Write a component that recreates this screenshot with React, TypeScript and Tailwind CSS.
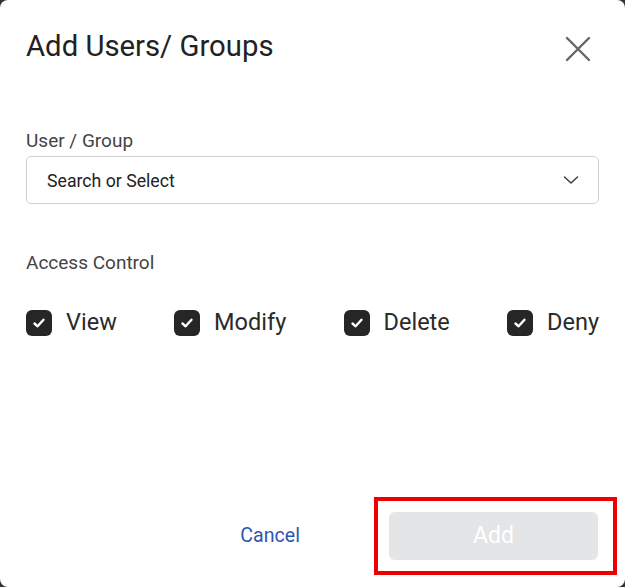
import React from "react";

function Check({ label }: { label: string }) {
  return (
    <label className="flex items-center gap-[14px]">
      <span className="flex h-[26px] w-[26px] items-center justify-center rounded-[6px] bg-[#262626]">
        <svg width="14" height="14" viewBox="0 0 14 14" fill="none">
          <path d="M2.5 7.5 L5.6 10.3 L11.5 3.8" stroke="#fff" strokeWidth="2.4" strokeLinecap="round" strokeLinejoin="round" />
        </svg>
      </span>
      <span className="text-[23.5px] text-[#2a2a2a]">{label}</span>
    </label>
  );
}

export default function App() {
  return (
    <div className="h-[587px] w-[625px] bg-[#333]" style={{ fontFamily: "Roboto, 'Liberation Sans', sans-serif" }}>
      <div className="flex h-full w-full flex-col rounded-[8px] bg-white px-[26px]">
        <div className="flex items-center justify-between pt-[28px]">
          <h1 className="text-[29.3px] leading-[36px] text-[#222]">Add Users/ Groups</h1>
          <svg width="26" height="26" viewBox="0 0 26 26" className="mr-[8px] mt-[6px]">
            <path d="M2 2 L24 24 M24 2 L2 24" stroke="#666" strokeWidth="2.4" strokeLinecap="round" />
          </svg>
        </div>
        <div className="mt-[65px] text-[19px] leading-[24px] text-[#444]">User / Group</div>
        <div className="mt-[3px] flex h-[48px] items-center justify-between rounded-[5px] border border-[#d0d0d0] pl-[20px] pr-[18px]">
          <span className="mt-[3px] text-[17.7px] text-[#222]">Search or Select</span>
          <svg width="18" height="18" viewBox="0 0 18 18" fill="none">
            <path d="M2.5 6 L9 12 L15.5 6" stroke="#444" strokeWidth="1.6" strokeLinecap="round" strokeLinejoin="round" />
          </svg>
        </div>
        <div className="mt-[47px] text-[19px] leading-[24px] text-[#444]">Access Control</div>
        <div className="mt-[30px] flex items-center justify-between">
          <Check label="View" />
          <Check label="Modify" />
          <Check label="Delete" />
          <Check label="Deny" />
        </div>
        <div className="mt-auto mb-[12px] flex items-center justify-end">
          <button className="mr-[74px] mt-[0px] text-[19.6px] text-[#2e56b3]">Cancel</button>
          <div className="mr-[-18px] border-[4px] border-[#ee0000] pb-[11px] pl-[11px] pr-[15px] pt-[11px]">
            <button className="flex h-[48px] w-[209px] items-center justify-center rounded-[6px] bg-[#e4e5e7] text-[23px] text-white">
              Add
            </button>
          </div>
        </div>
      </div>
    </div>
  );
}
